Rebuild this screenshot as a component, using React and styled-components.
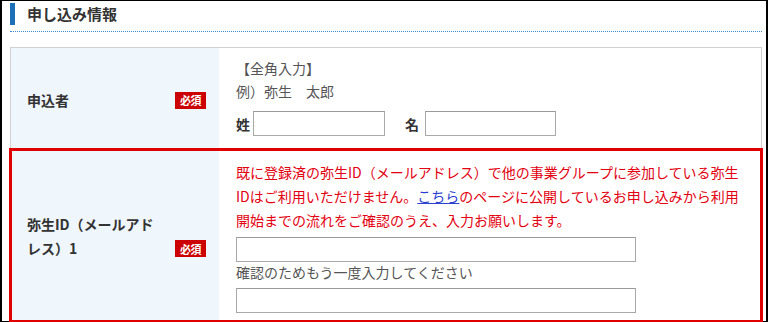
import React from 'react';
import styled, { createGlobalStyle } from 'styled-components';

const GlobalStyle = createGlobalStyle`
  html, body {
    margin: 0;
    padding: 0;
    background: #fff;
  }
  body {
    font-family: "Noto Sans CJK JP", "Noto Sans", sans-serif;
    color: #333;
  }
`;

const Frame = styled.div`
  box-sizing: border-box;
  width: 768px;
  height: 322px;
  border-top: 1px solid #000;
  border-left: 2px solid #000;
  border-right: 2px solid #000;
  border-bottom: 1px solid #000;
`;

const SectionTitle = styled.h2`
  display: flex;
  align-items: center;
  margin: 2px 4px 0 8px;
  padding: 0 0 6px;
  border-bottom: 1px dotted #3f8acb;
  font-size: 15px;
  font-weight: bold;
  line-height: 22px;
  color: #333;

  &::before {
    content: '';
    display: block;
    width: 5px;
    height: 22px;
    margin-right: 12px;
    background: #1d6fb8;
  }
`;

const Table = styled.div`
  margin: 15px 4px 0 8px;
  border: 1px solid #d2d2d2;
  border-bottom: none;
`;

const Row = styled.div`
  display: grid;
  grid-template-columns: 208px 1fr;
  border-bottom: 1px solid #dcdcdc;
  position: relative;
  outline: ${(p) => (p.$highlight ? '3px solid #e00000' : 'none')};
  outline-offset: -1px;
`;

const LabelCell = styled.div`
  display: flex;
  align-items: center;
  background: #eff6fc;
  padding: 2px 13px 0 16px;
`;

const LabelInner = styled.div`
  display: flex;
  align-items: flex-end;
  justify-content: space-between;
  width: 100%;
`;

const LabelText = styled.div`
  width: 140px;
  font-size: 14px;
  font-weight: bold;
  line-height: 24px;
  color: #333;
`;

const Badge = styled.span`
  display: inline-flex;
  align-items: center;
  justify-content: center;
  width: 31px;
  height: 17px;
  margin-bottom: 3px;
  background: #cc0000;
  color: #fff;
  font-size: 11px;
  font-weight: bold;
  letter-spacing: -0.5px;
`;

const ValueCell = styled.div`
  padding: ${(p) => p.$pad || '9px 0 13px 17px'};
`;

const Note = styled.p`
  margin: 0;
  font-size: 14px;
  line-height: ${(p) => p.$lh || '23px'};
  color: ${(p) => (p.$warn ? '#e3000f' : '#555')};
`;

const Link = styled.a`
  color: #2b3fd0;
  text-decoration: underline;
`;

const NameRow = styled.div`
  display: flex;
  align-items: center;
  margin-top: 8px;
`;

const NamePart = styled.label`
  display: flex;
  align-items: center;
  font-size: 14px;
  font-weight: bold;
  color: #333;
  margin-left: ${(p) => p.$offset || 0}px;
`;

const TextInput = styled.input`
  box-sizing: border-box;
  width: ${(p) => p.$w}px;
  height: 25px;
  margin: ${(p) => p.$m || 0};
  border: 1px solid #a9a9a9;
  border-top-color: #9a9a9a;
  background: #fff;
  padding: 2px 4px;
  font-size: 14px;
`;

const App = () => {
  return (
    <>
      <GlobalStyle />
      <Frame>
        <SectionTitle>申し込み情報</SectionTitle>
        <Table>
          <Row>
            <LabelCell>
              <LabelInner>
                <LabelText>申込者</LabelText>
                <Badge>必須</Badge>
              </LabelInner>
            </LabelCell>
            <ValueCell>
              <Note>【全角入力】</Note>
              <Note>例）弥生　太郎</Note>
              <NameRow>
                <NamePart>
                  姓<TextInput $w={132} $m="0 0 0 3px" />
                </NamePart>
                <NamePart $offset={20}>
                  名<TextInput $w={131} $m="0 0 0 6px" />
                </NamePart>
              </NameRow>
            </ValueCell>
          </Row>
          <Row $highlight>
            <LabelCell>
              <LabelInner>
                <LabelText>弥生ID（メールアドレス）1</LabelText>
                <Badge>必須</Badge>
              </LabelInner>
            </LabelCell>
            <ValueCell $pad="10px 0 7px 17px">
              <Note $warn $lh="24px">
                既に登録済の弥生ID（メールアドレス）で他の事業グループに参加している弥生
                <br />
                IDはご利用いただけません。<Link href="#">こちら</Link>のページに公開しているお申し込みから利用
                <br />
                開始までの流れをご確認のうえ、入力お願いします。
              </Note>
              <TextInput $w={400} $m="5px 0 0" />
              <Note $lh="20px">確認のためもう一度入力してください</Note>
              <TextInput $w={400} $m="6px 0 0" />
            </ValueCell>
          </Row>
        </Table>
      </Frame>
    </>
  );
};

export default App;
